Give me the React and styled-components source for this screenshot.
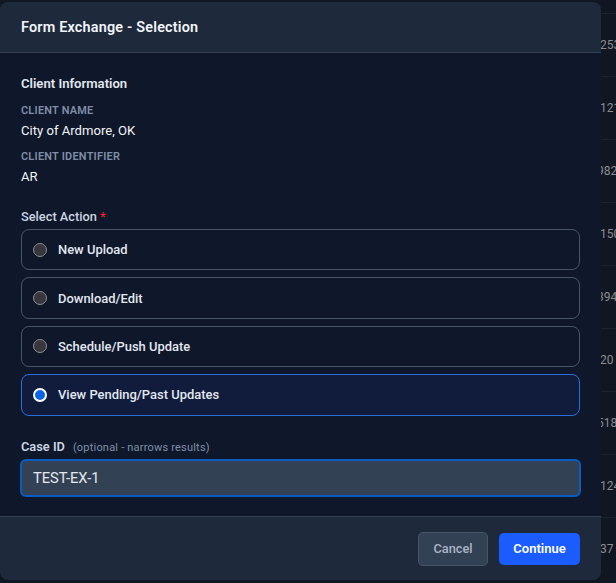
import React from 'react';
import styled, { createGlobalStyle } from 'styled-components';

const GlobalStyle = createGlobalStyle`
  html, body {
    margin: 0;
    padding: 0;
    background: #10151e;
    font-family: Roboto, "Liberation Sans", sans-serif;
    overflow: hidden;
  }
`;

const Page = styled.div`
  position: relative;
  width: 616px;
  height: 583px;
  overflow: hidden;
  background: #111722;
`;

const BackTable = styled.div`
  display: flex;
  flex-direction: column;
  padding-top: 13px;
`;

const BackRow = styled.div`
  box-sizing: border-box;
  height: 63px;
  padding-left: ${(props) => props.$left}px;
  border-top: 1px solid #1c232e;
  font-size: 12px;
  line-height: 63px;
  color: #8b8d90;
  white-space: nowrap;
`;

const Modal = styled.div`
  position: absolute;
  left: 0;
  top: 2px;
  width: 601px;
  height: 578px;
  display: flex;
  flex-direction: column;
  background: #0f172a;
  border-radius: 8px;
  overflow: hidden;
`;

const Header = styled.div`
  box-sizing: border-box;
  height: 51px;
  padding: 0 21px;
  display: flex;
  align-items: center;
  background: #1e293b;
  border-bottom: 1px solid #334155;
  font-size: 14.4px;
  font-weight: 600;
  letter-spacing: 0.2px;
  color: #f1f5f9;
`;

const Body = styled.div`
  flex: 1;
  padding: 23px 21px 0;
`;

const SectionTitle = styled.div`
  font-size: 13.1px;
  font-weight: 600;
  line-height: 15px;
  color: #e2e8f0;
  margin-bottom: 13px;
`;

const FieldLabel = styled.div`
  font-size: 10.9px;
  font-weight: 600;
  line-height: 13px;
  letter-spacing: 0.25px;
  color: #7f8ea6;
  text-transform: uppercase;
  margin-bottom: 6px;
`;

const FieldValue = styled.div`
  font-size: 13.1px;
  line-height: 16px;
  color: #f1f5f9;
  margin-bottom: 11px;
`;

const ActionLabel = styled.div`
  margin-top: 24px;
  font-size: 12.8px;
  font-weight: 500;
  line-height: 15px;
  color: #cbd5e1;
  margin-bottom: 5px;

  & span {
    color: #ef1d3c;
  }
`;

const Options = styled.div`
  display: flex;
  flex-direction: column;
  gap: 7px;
  width: 559px;
`;

const Option = styled.div`
  box-sizing: border-box;
  height: 41.4px;
  display: flex;
  align-items: center;
  gap: 11px;
  padding: 0 11px;
  border: 1px solid ${(props) => (props.$active ? '#2a6fdb' : '#475569')};
  border-radius: 8px;
  background: ${(props) => (props.$active ? '#111c3d' : 'transparent')};
  font-size: 12.95px;
  font-weight: 500;
  color: #e2e8f0;
`;

const Radio = styled.span`
  box-sizing: border-box;
  flex: none;
  width: 14px;
  height: 14px;
  border-radius: 50%;
  border: ${(props) => (props.$active ? '2px solid #fff' : '1px solid #8a8d93')};
  background: ${(props) => (props.$active ? '#0b63e5' : '#36363c')};
`;

const CaseLabel = styled.div`
  margin-top: 23px;
  margin-bottom: 4px;
  display: flex;
  align-items: baseline;
  gap: 8px;
  font-size: 12.8px;
  font-weight: 600;
  line-height: 15px;
  color: #cbd5e1;
`;

const Hint = styled.span`
  font-size: 11px;
  font-weight: 400;
  letter-spacing: 0.2px;
  color: #7f8ea6;
`;

const CaseInput = styled.input`
  box-sizing: border-box;
  display: block;
  width: 561px;
  height: 38px;
  margin-left: -1px;
  padding: 0 11px;
  border: 2px solid #0b5cc0;
  border-radius: 6px;
  outline: none;
  background: #334155;
  font-family: inherit;
  font-size: 14.7px;
  color: #e2e8f0;
`;

const Footer = styled.div`
  box-sizing: border-box;
  height: 64px;
  padding: 0 21px;
  display: flex;
  align-items: center;
  justify-content: flex-end;
  gap: 11px;
  background: #1e293b;
  border-top: 1px solid #334155;
`;

const CancelButton = styled.button`
  box-sizing: border-box;
  width: 70px;
  height: 34px;
  padding: 0;
  border: 1px solid #475569;
  border-radius: 5px;
  background: #334155;
  font-family: inherit;
  font-size: 12.8px;
  font-weight: 500;
  color: #a9b4c4;
`;

const ContinueButton = styled.button`
  box-sizing: border-box;
  width: 81px;
  height: 32px;
  padding: 0;
  border: 0;
  border-radius: 5px;
  background: #1a5cff;
  font-family: inherit;
  font-size: 13px;
  font-weight: 600;
  color: #fff;
`;

const backRows = [
  { n: '253', left: 600 },
  { n: '121', left: 600 },
  { n: '982', left: 597 },
  { n: '150', left: 600 },
  { n: '394', left: 597 },
  { n: '20', left: 600 },
  { n: '518', left: 597 },
  { n: '124', left: 600 },
  { n: '37', left: 600 },
];
const actions = ['New Upload', 'Download/Edit', 'Schedule/Push Update', 'View Pending/Past Updates'];

export default function App() {
  return (
    <Page>
      <GlobalStyle />
      <BackTable>
        {backRows.map((row) => (
          <BackRow key={row.n} $left={row.left}>{row.n}</BackRow>
        ))}
      </BackTable>
      <Modal>
        <Header>Form Exchange - Selection</Header>
        <Body>
          <SectionTitle>Client Information</SectionTitle>
          <FieldLabel>Client Name</FieldLabel>
          <FieldValue>City of Ardmore, OK</FieldValue>
          <FieldLabel>Client Identifier</FieldLabel>
          <FieldValue>AR</FieldValue>
          <ActionLabel>Select Action <span>*</span></ActionLabel>
          <Options>
            {actions.map((a, i) => (
              <Option key={a} $active={i === 3}>
                <Radio $active={i === 3} />
                {a}
              </Option>
            ))}
          </Options>
          <CaseLabel>Case ID <Hint>(optional - narrows results)</Hint></CaseLabel>
          <CaseInput defaultValue="TEST-EX-1" />
        </Body>
        <Footer>
          <CancelButton>Cancel</CancelButton>
          <ContinueButton>Continue</ContinueButton>
        </Footer>
      </Modal>
    </Page>
  );
}
